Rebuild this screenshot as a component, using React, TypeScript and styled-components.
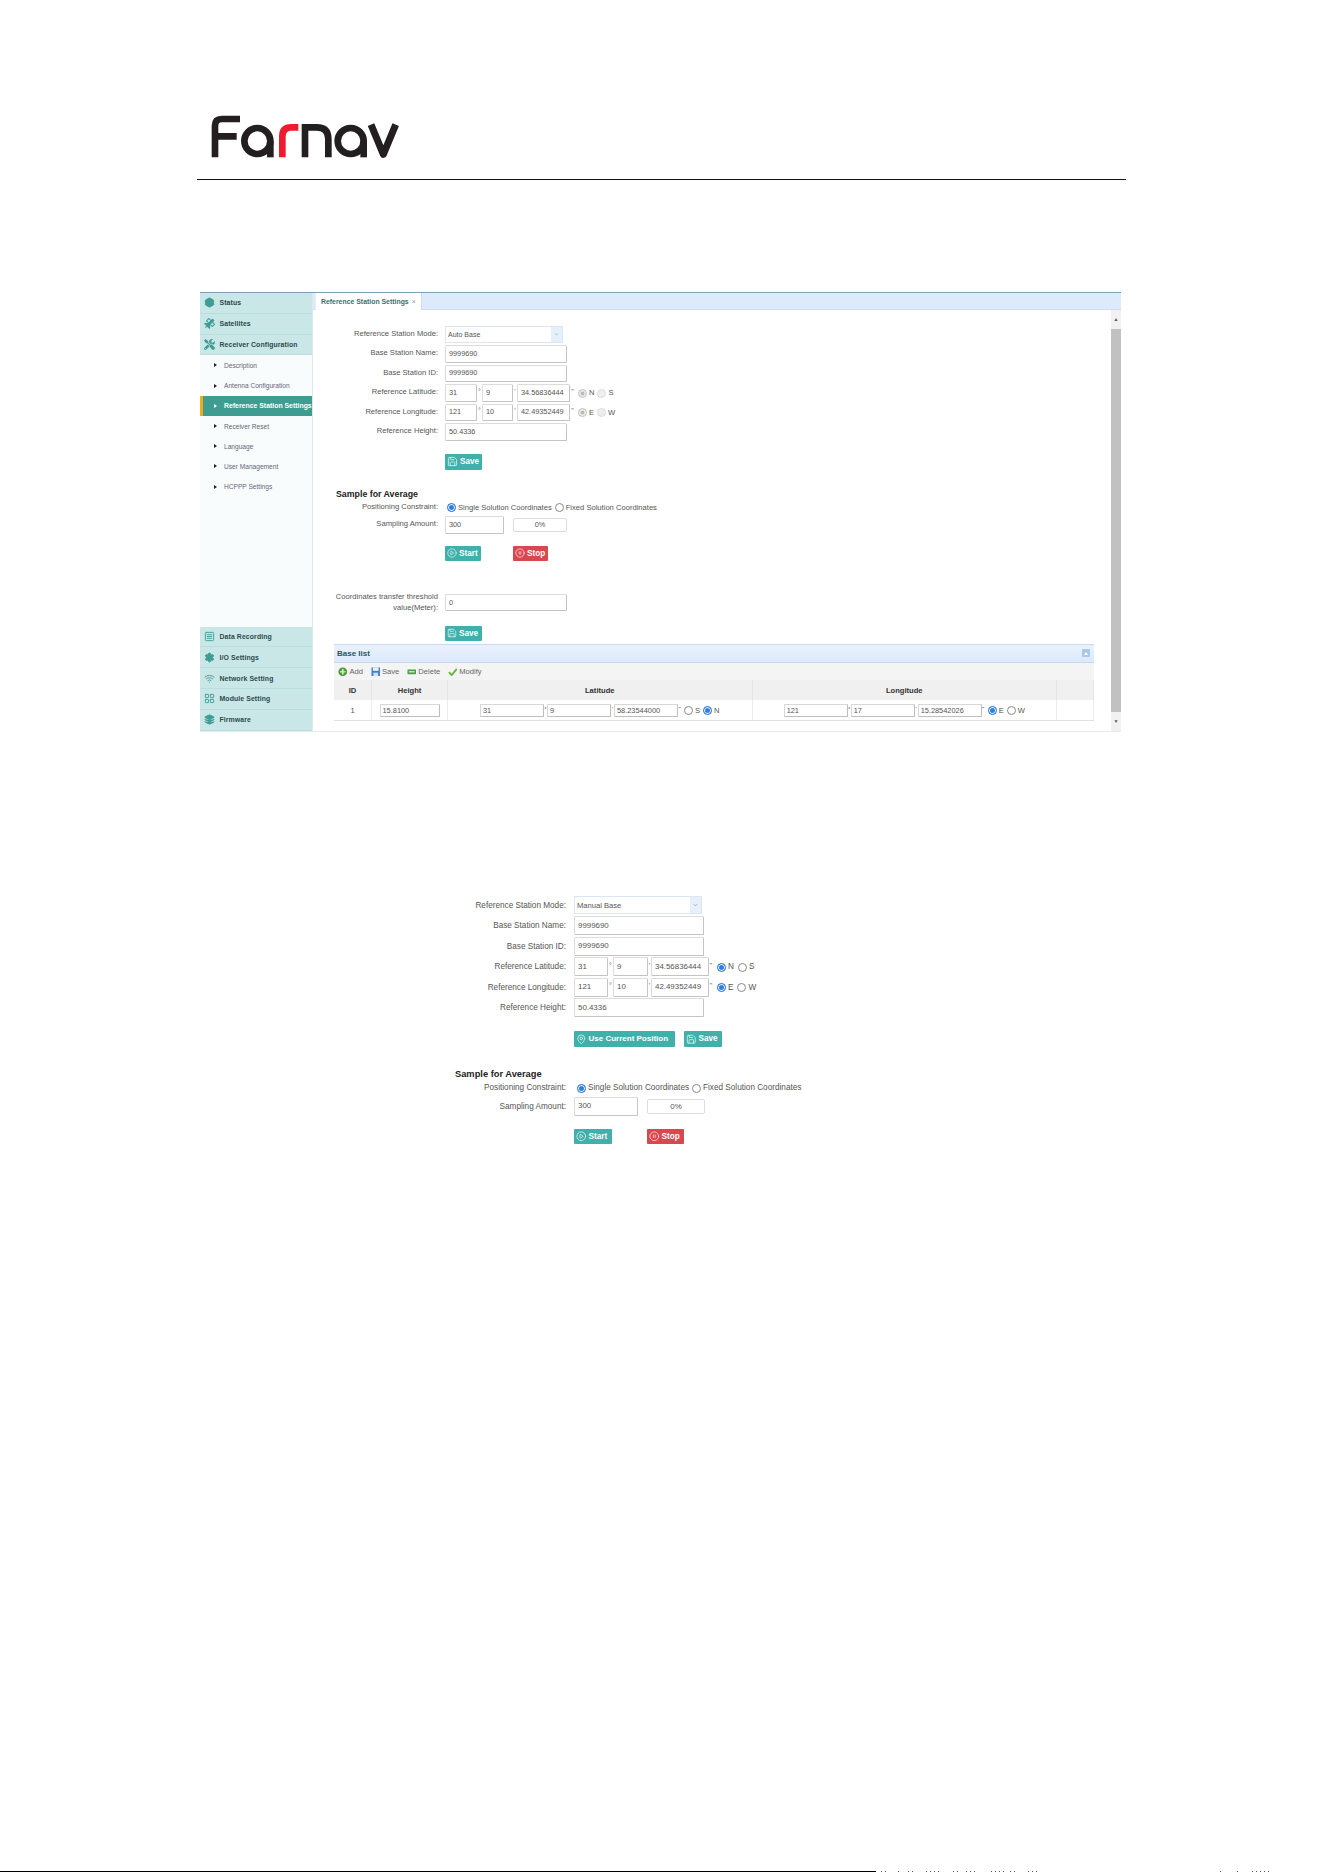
import React from 'react';
import styled, { createGlobalStyle } from 'styled-components';
import { Save, MapPin, CirclePlay, CirclePause, Wifi, LayoutGrid, Settings, SquareMenu, Hexagon, Layers } from 'lucide-react';
import { FaTools, FaSatellite } from 'react-icons/fa';

const Global = createGlobalStyle`
  html, body { margin: 0; padding: 0; background: #fff; }
  body { font-family: "Liberation Sans", Arial, sans-serif; color: #444; }
  * { box-sizing: border-box; }
`;

const Page = styled.div`
  width: 1324px; height: 1872px; overflow: hidden;
  display: flex; flex-direction: column; background: #fff;
`;
const Header = styled.header`
  padding: 113px 0 0 210px; height: 179px;
`;
const Rule = styled.div`
  width: 929px; height: 1px; background: #111; margin: 0 0 0 197px;
`;
const Shot = styled.section`
  width: 921px; height: 439.5px; margin: 112px 0 0 200px;
  display: flex; border-top: 1px solid #7f9fb2; border-bottom: 1px solid #e2ebf2;
`;
const Side = styled.nav`
  width: 113px; display: flex; flex-direction: column; background: #f8fcfd;
  border-right: 1px solid #dce8ee;
`;
const SideHead = styled.div`
  height: 20.8px; flex: none; display: flex; align-items: center; gap: 4.5px; padding-left: 4px;
  background: #c9e7e7; border-bottom: 1px solid #b9dede;
  font: 700 6.9px "Liberation Sans", sans-serif; letter-spacing: 0.1px; color: #2c4a4c;
  white-space: nowrap;
  svg { width: 11px; height: 11px; color: #3e9d95; flex: none; }
`;
const SubList = styled.div`
  flex: 1;
`;
const SubItem = styled.div<{ $active?: boolean }>`
  height: 20.2px; display: flex; align-items: center; padding-left: ${p => p.$active ? '11px' : '14px'};
  font: ${p => p.$active ? 700 : 400} ${p => p.$active ? 6.9 : 6.6}px "Liberation Sans", sans-serif;
  white-space: nowrap;
  color: ${p => p.$active ? '#fff' : '#667'};
  background: ${p => p.$active ? '#3f9c90' : 'transparent'};
  border-left: ${p => p.$active ? '3px solid #f0ad1d' : '0'};
  &::before {
    content: ''; flex: none; margin-right: 7px;
    border-left: 3px solid ${p => p.$active ? '#fff' : '#222'};
    border-top: 2px solid transparent; border-bottom: 2px solid transparent;
  }
`;
const Main = styled.div`
  flex: 1; display: flex; flex-direction: column; min-width: 0;
`;
const TabBar = styled.div`
  height: 16.5px; flex: none; background: #dceafc; border-bottom: 1px solid #cfdff2;
  display: flex; padding-left: 2px;
`;
const Tab = styled.div`
  height: 16.5px; padding: 0 5px; background: #fff; border-right: 1px solid #cfdff2; border-left: 1px solid #e4eef8;
  font: 700 6.9px "Liberation Sans", sans-serif; color: #39706f; display: flex; align-items: center; gap: 3px;
  white-space: nowrap;
  span { color: #999; font-weight: 400; }
`;
const Body = styled.div`
  flex: 1; display: flex; min-height: 0;
`;
const Content = styled.div`
  flex: 1; min-width: 0; padding-top: 15px;
`;
const Scrollbar = styled.div`
  width: 10px; flex: none; background: #f1f1f1; display: flex; flex-direction: column; align-items: center;
  font-size: 5px; color: #555;
`;
const ScrollArrow = styled.div`
  height: 19px; flex: none; display: flex; align-items: center; justify-content: center;
`;
const ScrollThumb = styled.div`
  flex: 1; width: 100%; background: #c1c1c1;
`;

type Dim = { label: number; pitch: number; font: number; field: number; inputH: number; wide: number; selectW: number; lat: number[]; gap: number[] };

const Form = styled.div<{ $left: number }>`
  margin-left: ${p => p.$left}px;
`;
const Row = styled.div<{ $d: Dim }>`
  display: flex; align-items: center; height: ${p => p.$d.pitch}px;
  font-size: ${p => p.$d.font}px; color: #555;
`;
const Label = styled.label<{ $d: Dim }>`
  width: ${p => p.$d.label}px; flex: none; text-align: right; line-height: 1.4;
  margin-right: ${p => p.$d.gap[2]}px; color: #555;
`;
const Field = styled.input<{ $w: number; $h: number; $font: number }>`
  width: ${p => p.$w}px; height: ${p => p.$h}px; flex: none; padding: 0 2px 1px 3px; margin: 0;
  border: 1px solid #dcdcdc; border-right-color: #c4c4c4; border-bottom-color: #c4c4c4; border-radius: 1.5px; outline: 0;
  font: ${p => p.$font}px "Liberation Sans", sans-serif; color: #555; background: #fff;
`;
const Select = styled.div<{ $w: number; $h: number; $font: number }>`
  width: ${p => p.$w}px; height: ${p => p.$h}px; padding-left: 2px; border: 1px solid #dbe6f3; display: flex; align-items: center; justify-content: space-between;
  font-size: ${p => p.$font - 0.3}px; color: #555; background: #fff;
  svg { width: 11px; height: 100%; background: #e6f0fb; color: #8aa; }
`;
const Sep = styled.span<{ $w: number }>`
  width: ${p => p.$w}px; flex: none; text-align: center; font-size: 7px; color: #666; align-self: center; line-height: 1; padding-bottom: 3px;
`;
const Radio = styled.input<{ $gapL?: number }>`
  appearance: none; width: 9px; height: 9px; border-radius: 50%; margin: 1px 2px 0 ${p => p.$gapL ?? 0}px; flex: none;
  border: 1px solid #888; background: #fff;
  &:checked { background: #2f7de1; box-shadow: inset 0 0 0 1px #fff; border-color: #2f7de1; }
  &:disabled { border-color: #ddd; background: #eee; box-shadow: none; }
  &:disabled:checked { background: #bbb; box-shadow: inset 0 0 0 1.5px #eee; border-color: #ccc; }
`;
const Btn = styled.button<{ $red?: boolean; $w: number; $h: number; $font: number; $mr?: number }>`
  width: ${p => p.$w}px; height: ${p => p.$h}px; flex: none; border: 0; border-radius: 1px; padding: 0 0 0 2px; margin: 0 ${p => p.$mr ?? 0}px 0 0;
  background: ${p => p.$red ? '#d9474f' : '#3fb0ab'}; color: #fff;
  font: 700 ${p => p.$font}px "Liberation Sans", sans-serif; display: flex; align-items: center; gap: 2px; white-space: nowrap;
  svg { width: ${p => p.$h - 5}px; height: ${p => p.$h - 5}px; flex: none; stroke-width: 1.5; }
`;
const ButtonRow = styled.div<{ $left: number; $top: number }>`
  display: flex; margin: ${p => p.$top}px 0 0 ${p => p.$left}px;
`;
const Heading = styled.h3<{ $left: number; $top: number; $size: number }>`
  margin: ${p => p.$top}px 0 0 ${p => p.$left}px; font-size: ${p => p.$size}px; font-weight: 700; color: #222; line-height: 12px;
`;
const Progress = styled.div<{ $w: number; $h: number; $ml: number; $font: number }>`
  width: ${p => p.$w}px; height: ${p => p.$h}px; margin-left: ${p => p.$ml}px; border: 1px solid #ddd; border-radius: 2px;
  display: flex; align-items: center; justify-content: center; font-size: ${p => p.$font}px; color: #555;
`;
const Chevron = () => (
  <svg viewBox="0 0 11 24"><path d="M3 10.5 5.5 13.5 8 10.5" fill="none" stroke="currentColor" strokeWidth="1" /></svg>
);

const RadioText = styled.span`
  margin-right: 0;
`;

function StationForm({ d, mode, disabled, latRadioGap, children }: { d: Dim; mode: string; disabled?: boolean; latRadioGap: number; children?: React.ReactNode }) {
  const triple = (vals: string[], a: string, b: string) => (
    <Row $d={d}>
      <Label $d={d}>{a === 'N' ? 'Reference Latitude:' : 'Reference Longitude:'}</Label>
      <Field $w={d.lat[0]} $h={d.inputH} $font={d.field} value={vals[0]} readOnly />
      <Sep $w={d.gap[0]}>°</Sep>
      <Field $w={d.lat[1]} $h={d.inputH} $font={d.field} value={vals[1]} readOnly />
      <Sep $w={d.gap[1]}>'</Sep>
      <Field $w={d.lat[2]} $h={d.inputH} $font={d.field} value={vals[2]} readOnly />
      <Sep $w={d.gap[3]}>"</Sep>
      <Radio type="radio" checked disabled={disabled} readOnly $gapL={latRadioGap} />
      <RadioText>{a}</RadioText>
      <Radio type="radio" disabled={disabled} readOnly $gapL={latRadioGap} />
      <RadioText>{b}</RadioText>
    </Row>
  );
  return (
    <div>
      <Row $d={d}>
        <Label $d={d}>Reference Station Mode:</Label>
        <Select $w={d.selectW} $h={d.inputH - 1} $font={d.field}>{mode}<Chevron /></Select>
      </Row>
      <Row $d={d}><Label $d={d}>Base Station Name:</Label><Field $w={d.wide} $h={d.inputH} $font={d.field} value="9999690" readOnly /></Row>
      <Row $d={d}><Label $d={d}>Base Station ID:</Label><Field $w={d.wide} $h={d.inputH} $font={d.field} value="9999690" readOnly /></Row>
      {triple(['31', '9', '34.56836444'], 'N', 'S')}
      {triple(['121', '10', '42.49352449'], 'E', 'W')}
      <Row $d={d}><Label $d={d}>Reference Height:</Label><Field $w={d.wide} $h={d.inputH} $font={d.field} value="50.4336" readOnly /></Row>
      {children}
    </div>
  );
}

function SampleRows({ d, w, prog, gapL }: { d: Dim; w: number; prog: number; gapL: number }) {
  return (
    <>
      <Row $d={{ ...d, pitch: d.pitch - 4 }}>
        <Label $d={d}>Positioning Constraint:</Label>
        <Radio type="radio" checked readOnly $gapL={gapL} />
        <RadioText>Single Solution Coordinates</RadioText>
        <Radio type="radio" readOnly $gapL={3} />
        <RadioText>Fixed Solution Coordinates</RadioText>
      </Row>
      <Row $d={d}>
        <Label $d={d}>Sampling Amount:</Label>
        <Field $w={w} $h={d.inputH} $font={d.field} value="300" readOnly />
        <Progress $w={prog} $h={d.inputH - 4} $ml={9} $font={d.field}>0%</Progress>
      </Row>
    </>
  );
}

const dimA: Dim = { label: 103, pitch: 19.5, font: 7.6, field: 7.3, inputH: 17.5, wide: 122, selectW: 118, lat: [32, 31, 53], gap: [5, 4, 7, 5] };
const dimB: Dim = { label: 111, pitch: 20.5, font: 8.2, field: 7.9, inputH: 19, wide: 130, selectW: 128, lat: [34, 35, 58], gap: [5, 3, 8, 4] };

const Threshold = styled.div`
  margin-top: 32px;
`;
const TallRow = styled(Row)`
  height: 20px;
`;
const Panel = styled.div`
  margin: 3px 0 0 21px; width: 760px;
`;
const PanelHead = styled.div`
  height: 19.5px; border: 1px solid #c9d9ee; border-width: 1px 0; background: linear-gradient(#e9f1fd, #dce9fb);
  display: flex; align-items: center; justify-content: space-between; padding: 0 3px;
  font-size: 8px; font-weight: 700; color: #2b5566;
`;
const Collapse = styled.span`
  width: 8px; height: 8px; border-radius: 1px; background: #a9c7e8; margin-right: 1px;
  display: flex; align-items: center; justify-content: center;
  &::after { content: ''; border-bottom: 3px solid #fff; border-left: 2.5px solid transparent; border-right: 2.5px solid transparent; }
`;
const Toolbar = styled.div`
  height: 17px; background: #f4f4f4; display: flex; align-items: center; padding-left: 4px; gap: 4.5px;
  font-size: 7.6px; color: #666;
`;
const Tool = styled.span`
  display: flex; align-items: center; gap: 2px; padding-right: 3px;
  svg { width: 9.5px; height: 9.5px; flex: none; }
`;
const TableGrid = styled.div`
  display: grid; grid-template-columns: 38px 76px 304.5px 304.5px 37px;
  border-bottom: 1px solid #e0e0e0;
`;
const Th = styled.div`
  height: 20px; background: #f0f0f0; border-right: 1px solid #e4e4e4; display: flex; align-items: center; justify-content: center;
  font-size: 7.6px; font-weight: 700; color: #333;
  &:last-of-type { border-right: 0; }
`;
const Td = styled.div`
  height: 20px; border-right: 1px solid #ececec; display: flex; align-items: center; justify-content: center; font-size: 7.6px; color: #555;
`;
const CellField = styled.input<{ $w: number }>`
  width: ${p => p.$w}px; height: 13px; padding: 0 2px; margin: 0; flex: none; outline: 0;
  border: 1px solid #d8d8d8; border-right-color: #bfbfbf; border-bottom-color: #bfbfbf; border-radius: 1px;
  font: 7.4px "Liberation Sans", sans-serif; color: #555;
`;
const CellSep = styled.span`
  width: 3px; font-size: 6px; flex: none; text-align: center; padding-bottom: 3px;
`;
const SecondForm = styled.section`
  margin: 163.5px 0 0 455px;
`;
const Footer = styled.footer`
  margin-top: auto; height: 1px; display: flex;
`;
const FootLine = styled.div`
  width: 876px; height: 1px; background: #000; flex: none;
`;

const Logo = () => (
  <svg width="191.7" height="46.7" viewBox="90 70 575 140" fill="none" strokeWidth="20">
    <g stroke="#231f20">
      <path d="M105 203V108Q105 88 125 88H180M105 140H170" />
      <circle cx="232" cy="154" r="39" />
      <path d="M271 154V203" />
      <path d="M375 203V113H410Q445 113 445 148V203" />
      <circle cx="512" cy="154" r="39" />
      <path d="M551 154V203" />
      <path d="M573 105L610 194L647 105" strokeLinejoin="round" strokeWidth="21" />
    </g>
    <path d="M307 203V140Q307 113 334 113H355" stroke="#ee1c2e" />
  </svg>
);

const AddIcon = () => (
  <svg viewBox="0 0 10 10"><circle cx="5" cy="5" r="4.6" fill="#4c9a3c" /><path d="M5 2.2V7.8M2.2 5H7.8" stroke="#cdeebc" strokeWidth="1.8" /></svg>
);
const SaveIcon = () => (
  <svg viewBox="0 0 10 10"><rect x=".5" y=".5" width="9" height="9" fill="#3f83c9" /><rect x="2" y=".5" width="6" height="3.5" fill="#e8f2fb" /><rect x="2.5" y="6" width="5" height="3.5" fill="#cfe0f1" /></svg>
);
const DelIcon = () => (
  <svg viewBox="0 0 10 10"><rect x=".5" y="2.5" width="9" height="5" rx=".5" fill="#4aa04a" /><rect x="2" y="4.3" width="6" height="1.4" fill="#cfeccd" /></svg>
);
const OkIcon = () => (
  <svg viewBox="0 0 10 10"><path d="M1 5.5 3.8 8.5 9.3 2" fill="none" stroke="#6db33f" strokeWidth="2" /></svg>
);

const FootDots = () => (
  <svg width="448" height="1" viewBox="0 0 448 1">
    {[[5, 5], [22, 3], [32, 6], [50, 14], [77, 6], [90, 12], [115, 15], [134, 5], [152, 12], [344, 3], [361, 3], [376, 20]].map(([x, w]) => (
      <line key={x} x1={x} x2={x + w} y1=".5" y2=".5" stroke="#555" strokeDasharray="1 3" />
    ))}
  </svg>
);

export default function App() {
  return (
    <Page>
      <Global />
      <Header><Logo /></Header>
      <Rule />
      <Shot>
        <Side>
          <SideHead><Hexagon fill="currentColor" />Status</SideHead>
          <SideHead><FaSatellite />Satellites</SideHead>
          <SideHead><FaTools />Receiver Configuration</SideHead>
          <SubList>
            <SubItem>Description</SubItem>
            <SubItem>Antenna Configuration</SubItem>
            <SubItem $active>Reference Station Settings</SubItem>
            <SubItem>Receiver Reset</SubItem>
            <SubItem>Language</SubItem>
            <SubItem>User Management</SubItem>
            <SubItem>HCPPP Settings</SubItem>
          </SubList>
          <SideHead><SquareMenu />Data Recording</SideHead>
          <SideHead><Settings fill="currentColor" />I/O Settings</SideHead>
          <SideHead><Wifi />Network Setting</SideHead>
          <SideHead><LayoutGrid />Module Setting</SideHead>
          <SideHead><Layers fill="currentColor" />Firmware</SideHead>
        </Side>
        <Main>
          <TabBar><Tab>Reference Station Settings <span>×</span></Tab></TabBar>
          <Body>
            <Content>
              <Form $left={22}>
                <StationForm d={dimA} mode="Auto Base" disabled latRadioGap={3}>
                  <ButtonRow $left={110} $top={12}>
                    <Btn $w={37} $h={16} $font={8.2}><Save />Save</Btn>
                  </ButtonRow>
                </StationForm>
              </Form>
              <Heading $left={23} $top={18} $size={8.8}>Sample for Average</Heading>
              <Form $left={22}>
                <SampleRows d={dimA} w={59} prog={54} gapL={2} />
                <ButtonRow $left={110} $top={11}>
                  <Btn $w={36} $h={15} $font={8.2} $mr={32}><CirclePlay />Start</Btn>
                  <Btn $red $w={35} $h={15} $font={8.2}><CirclePause />Stop</Btn>
                </ButtonRow>
                <Threshold>
                  <TallRow $d={dimA}>
                    <Label $d={dimA}>Coordinates transfer threshold<br />value(Meter):</Label>
                    <Field $w={122} $h={16.5} $font={7.3} value="0" readOnly />
                  </TallRow>
                </Threshold>
                <ButtonRow $left={110} $top={13}>
                  <Btn $w={37} $h={15} $font={8.2}><Save />Save</Btn>
                </ButtonRow>
              </Form>
              <Panel>
                <PanelHead>Base list<Collapse /></PanelHead>
                <Toolbar>
                  <Tool><AddIcon />Add</Tool>
                  <Tool><SaveIcon />Save</Tool>
                  <Tool><DelIcon />Delete</Tool>
                  <Tool><OkIcon />Modify</Tool>
                </Toolbar>
                <TableGrid>
                  <Th>ID</Th><Th>Height</Th><Th>Latitude</Th><Th>Longitude</Th><Th />
                  <Td>1</Td>
                  <Td><CellField $w={60} value="15.8100" readOnly /></Td>
                  <Td>
                    <CellField $w={64} value="31" readOnly /><CellSep>°</CellSep>
                    <CellField $w={64} value="9" readOnly /><CellSep>'</CellSep>
                    <CellField $w={64} value="58.23544000" readOnly /><CellSep>"</CellSep>
                    <Radio type="radio" readOnly $gapL={3} />S
                    <Radio type="radio" checked readOnly $gapL={3} />N
                  </Td>
                  <Td>
                    <CellField $w={64} value="121" readOnly /><CellSep>°</CellSep>
                    <CellField $w={64} value="17" readOnly /><CellSep>'</CellSep>
                    <CellField $w={64} value="15.28542026" readOnly /><CellSep>"</CellSep>
                    <Radio type="radio" checked readOnly $gapL={3} />E
                    <Radio type="radio" readOnly $gapL={3} />W
                  </Td>
                  <Td />
                </TableGrid>
              </Panel>
            </Content>
            <Scrollbar>
              <ScrollArrow>▲</ScrollArrow>
              <ScrollThumb />
              <ScrollArrow>▼</ScrollArrow>
            </Scrollbar>
          </Body>
        </Main>
      </Shot>
      <SecondForm>
        <StationForm d={dimB} mode="Manual Base" latRadioGap={4}>
          <ButtonRow $left={119} $top={13}>
            <Btn $w={101} $h={15.5} $font={8} $mr={9}><MapPin />Use Current Position</Btn>
            <Btn $w={38} $h={15.5} $font={8.2}><Save />Save</Btn>
          </ButtonRow>
        </StationForm>
        <Heading $left={0} $top={21} $size={9.3}>Sample for Average</Heading>
        <SampleRows d={dimB} w={64} prog={58} gapL={3} />
        <ButtonRow $left={119} $top={12}>
          <Btn $w={38} $h={15.5} $font={8.2} $mr={35}><CirclePlay />Start</Btn>
          <Btn $red $w={37} $h={15.5} $font={8.2}><CirclePause />Stop</Btn>
        </ButtonRow>
      </SecondForm>
      <Footer><FootLine /><FootDots /></Footer>
    </Page>
  );
}
